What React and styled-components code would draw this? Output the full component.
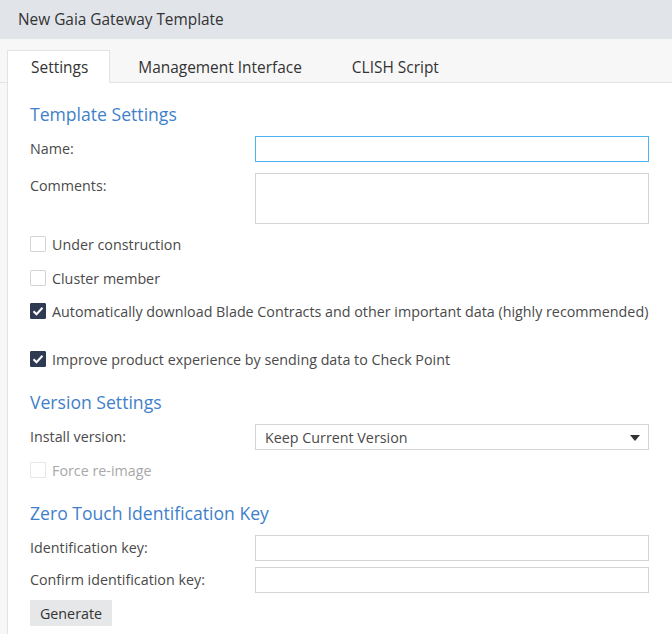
import React from "react";
import styled, { createGlobalStyle } from "styled-components";

const Global = createGlobalStyle`
  html, body { margin: 0; padding: 0; }
  body {
    background: #f7f7f7;
    font-family: "Open Sans", "Noto Sans", sans-serif;
    color: #333;
    width: 672px;
    height: 634px;
    overflow: hidden;
  }
  * { box-sizing: border-box; }
`;

const Page = styled.div`
  display: flex;
  flex-direction: column;
  width: 672px;
  height: 634px;
  background: #f7f7f7;
`;

const Header = styled.div`
  height: 39px;
  background: #e1e4e9;
  display: flex;
  align-items: center;
  padding: 0 0 1px 18px;
  font-size: 15.4px;
  color: #333;
`;

const TabBar = styled.div`
  display: flex;
  gap: 4px;
  padding: 11px 0 0 7px;
  border-bottom: 1px solid #e0e3e8;
`;

const Tab = styled.div`
  height: 33px;
  padding: 0 21px 1px 23px;
  display: flex;
  align-items: center;
  font-size: 15.45px;
  color: #333;
  background: ${(p) => (p.$active ? "#fff" : "transparent")};
  border: 1px solid ${(p) => (p.$active ? "#e0e3e8" : "transparent")};
  border-bottom: none;
  margin-bottom: -1px;
`;

const Panel = styled.div`
  flex: 1;
  margin-left: 7px;
  background: #fff;
  border-left: 1px solid #e0e3e8;
  padding: 0 23px 0 22px;
  display: flex;
  flex-direction: column;
`;

const Heading = styled.h2`
  margin: ${(p) => p.$mt}px 0 0 0;
  font-size: 17.6px;
  font-weight: 400;
  line-height: 26px;
  color: #3f7fcb;
`;

const Row = styled.div`
  margin-top: ${(p) => p.$mt}px;
  display: grid;
  grid-template-columns: 225px 1fr;
  align-items: start;
`;

const Label = styled.div`
  font-size: 14.3px;
  line-height: 26px;
  color: #4a4a4a;
`;

const TextInput = styled.div`
  height: ${(p) => p.$h || 26}px;
  border: 1px solid ${(p) => (p.$focus ? "#4db3f0" : "#d4d4d4")};
  background: #fff;
`;

const Select = styled.div`
  height: 26px;
  border: 1px solid #d4d4d4;
  display: flex;
  align-items: center;
  justify-content: space-between;
  padding: 0 8px 0 9px;
  font-size: 14.3px;
  color: #4a4a4a;
`;

const Caret = styled.span`
  width: 0;
  height: 0;
  border-left: 5px solid transparent;
  border-right: 5px solid transparent;
  border-top: 6px solid #333;
  margin-top: 1px;
`;

const CheckRow = styled.label`
  margin-top: ${(p) => p.$mt}px;
  height: 24px;
  display: flex;
  align-items: center;
  gap: 6px;
  font-size: 14.3px;
  color: ${(p) => (p.$disabled ? "#a8a8a8" : "#4a4a4a")};
  white-space: nowrap;
`;

const Box = styled.span`
  width: 16px;
  height: 16px;
  flex: none;
  border: 1px solid ${(p) => (p.$checked ? "#2d3a51" : p.$disabled ? "#e6e6e6" : "#d4d4d4")};
  background: ${(p) => (p.$checked ? "#2d3a51" : "#fff")};
  border-radius: 1px;
  display: flex;
  align-items: center;
  justify-content: center;
`;

const Button = styled.button`
  margin-top: ${(p) => p.$mt}px;
  align-self: flex-start;
  height: 26px;
  width: 82px;
  border: none;
  background: #e6e7e9;
  font-family: inherit;
  font-size: 14.3px;
  color: #333;
  padding: 0;
`;

const Check = ({ checked, disabled, label, mt }) => (
  <CheckRow $mt={mt} $disabled={disabled}>
    <Box $checked={checked} $disabled={disabled}>
      {checked && (
        <svg width="12" height="10" viewBox="0 0 12 10">
          <path d="M1.5 5.2 L4.5 8.2 L10.5 1.8" fill="none" stroke="#fff" strokeWidth="2" />
        </svg>
      )}
    </Box>
    {label}
  </CheckRow>
);

export default function App() {
  return (
    <Page>
      <Global />
      <Header>New Gaia Gateway Template</Header>
      <TabBar>
        <Tab $active>Settings</Tab>
        <Tab>Management Interface</Tab>
        <Tab>CLISH Script</Tab>
      </TabBar>
      <Panel>
        <Heading $mt={18}>Template Settings</Heading>
        <Row $mt={9}>
          <Label>Name:</Label>
          <TextInput $focus />
        </Row>
        <Row $mt={11}>
          <Label>Comments:</Label>
          <TextInput $h={51} />
        </Row>
        <Check mt={8} label="Under construction" />
        <Check mt={10} label="Cluster member" />
        <Check mt={9} checked label="Automatically download Blade Contracts and other important data (highly recommended)" />
        <Check mt={24} checked label="Improve product experience by sending data to Check Point" />
        <Heading $mt={18}>Version Settings</Heading>
        <Row $mt={9}>
          <Label>Install version:</Label>
          <Select>
            Keep Current Version
            <Caret />
          </Select>
        </Row>
        <Check mt={8} disabled label="Force re-image" />
        <Heading $mt={18}>Zero Touch Identification Key</Heading>
        <Row $mt={9}>
          <Label>Identification key:</Label>
          <TextInput />
        </Row>
        <Row $mt={6}>
          <Label>Confirm identification key:</Label>
          <TextInput />
        </Row>
        <Button $mt={7}>Generate</Button>
      </Panel>
    </Page>
  );
}
